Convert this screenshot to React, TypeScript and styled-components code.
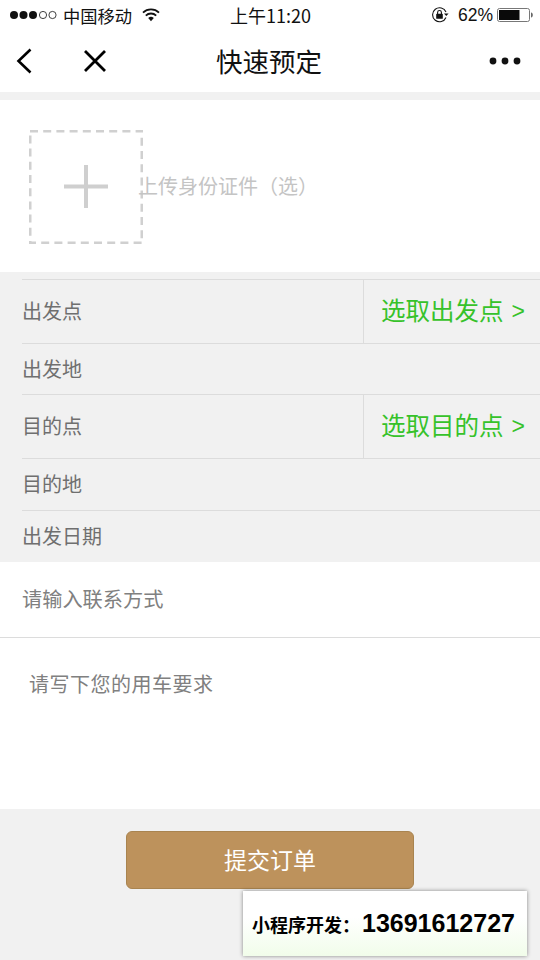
import React from 'react';
import styled, { createGlobalStyle } from 'styled-components';

const CJK = `"Noto Sans CJK SC", "Liberation Sans", sans-serif`;

const Global = createGlobalStyle`
  html, body { margin: 0; padding: 0; background: #f1f1f1; }
  * { box-sizing: border-box; }
  body { font-family: ${CJK}; }
`;

const Page = styled.div`
  position: relative;
  width: 540px;
  height: 960px;
  overflow: hidden;
  background: #f1f1f1;
`;

const StatusBar = styled.div`
  position: relative;
  height: 30px;
  background: #fff;
  display: flex;
  align-items: center;
  justify-content: space-between;
  padding: 0 6px 0 9px;
  color: #111;
`;

const StatusSide = styled.div`
  display: flex;
  align-items: center;
`;

const Carrier = styled.span`
  margin-left: 5px;
  margin-right: 10px;
  font-size: 17.3px;
`;

const Clock = styled.span`
  position: absolute;
  left: 1px;
  right: 0;
  text-align: center;
  font-size: 18px;
  pointer-events: none;
`;

const Percent = styled.span`
  margin: 0 4px 0 9px;
  font-family: "Liberation Sans", sans-serif;
  font-size: 17.5px;
`;

const NavBar = styled.div`
  position: relative;
  height: 62px;
  background: #fff;
  display: flex;
  align-items: center;
  justify-content: space-between;
  padding: 0 19px 0 15px;
`;

const NavLeft = styled.div`
  display: flex;
  align-items: center;
  gap: 50px;
`;

const Title = styled.div`
  position: absolute;
  left: 0;
  right: 0;
  padding: 0 2px 2px 0;
  text-align: center;
  font-size: 26.5px;
  color: #111;
`;

const UploadCard = styled.div`
  margin-top: 8px;
  height: 172px;
  background: #fff;
  display: flex;
  align-items: center;
  padding: 1px 0 0 29px;
`;

const UploadBox = styled.div`
  flex: none;
  width: 114px;
  height: 114px;
  display: flex;
  align-items: center;
  justify-content: center;
`;

const UploadText = styled.span`
  font-size: 20px;
  color: #c4c4c4;
  margin: 0 0 3px -5px;
`;

const Form = styled.div`
  height: 290px;
  padding: 7px 0 0 22px;
`;

const Row = styled.div<{ $h: number }>`
  height: ${p => p.$h}px;
  border-top: 1px solid #dcdcdc;
  display: flex;
  align-items: stretch;
  font-size: 20px;
  color: #6f6f6f;
`;

const RowLabel = styled.div`
  flex: 1;
  display: flex;
  align-items: center;
  padding-bottom: 2px;
`;

const PickCell = styled.div`
  width: 177px;
  border-left: 1px solid #dcdcdc;
  display: flex;
  align-items: center;
  padding: 0 0 4px 17px;
  font-size: 24.5px;
  color: #36c22a;
  white-space: nowrap;
`;

const Arrow = styled.span`
  margin: 3px 0 0 8px;
  font-family: "Liberation Sans", sans-serif;
  font-size: 23px;
`;

const Inputs = styled.div`
  background: #fff;
  height: 247px;
`;

const ContactRow = styled.div`
  height: 76px;
  border-bottom: 1px solid #dcdcdc;
  display: flex;
  align-items: center;
  padding: 0 0 3px 22px;
  font-size: 20.2px;
  color: #808080;
`;

const Remark = styled.div`
  padding: 32px 0 0 29px;
  font-size: 20px;
  letter-spacing: 0.5px;
  line-height: 28px;
  color: #808080;
`;

const Footer = styled.div`
  display: flex;
  justify-content: center;
  padding-top: 22px;
`;

const Submit = styled.button`
  width: 288px;
  height: 58px;
  padding: 0 0 3px;
  border: 1px solid #a98450;
  border-radius: 6px;
  background: #bd925c;
  color: #fff;
  font-family: ${CJK};
  font-size: 23px;
`;

const Promo = styled.div`
  position: absolute;
  left: 243px;
  top: 891px;
  width: 284px;
  height: 65px;
  display: flex;
  align-items: center;
  padding: 0 0 0 9px;
  white-space: nowrap;
  background: linear-gradient(#ffffff 40%, #f1fdea);
  box-shadow: 0 0 4px rgba(0, 0, 0, 0.45);
  color: #000;
`;

const PromoLabel = styled.span`
  font-size: 18px;
  font-weight: 700;
  margin-right: 2px;
`;

const PromoPhone = styled.span`
  font-family: "Liberation Sans", sans-serif;
  font-size: 25px;
  font-weight: 700;
`;

const SignalDots = () => (
  <svg width="49" height="10" viewBox="0 0 49 10">
    {[5, 14.5, 24].map(x => <circle key={x} cx={x} cy="5" r="4" fill="#111" />)}
    {[34, 43.5].map(x => <circle key={x} cx={x} cy="5" r="3.6" fill="none" stroke="#111" strokeWidth="0.8" />)}
  </svg>
);

const WifiIcon = () => (
  <svg width="18" height="14" viewBox="0 0 18 14">
    <path d="M1 4.6 A11.5 11.5 0 0 1 17 4.6" fill="none" stroke="#111" strokeWidth="1.8" />
    <path d="M3.8 7.6 A7.5 7.5 0 0 1 14.2 7.6" fill="none" stroke="#111" strokeWidth="1.8" />
    <path d="M6.2 10 A4 4 0 0 1 11.8 10 L9 13.2 Z" fill="#111" />
  </svg>
);

const LockRotation = () => (
  <svg width="18" height="18" viewBox="0 0 18 18">
    <path d="M15 11.5 A7 7 0 1 1 15 6" fill="none" stroke="#111" strokeWidth="1.1" />
    <path d="M13 7.5 L17.6 7.5 L15.3 10 Z" fill="#111" />
    <rect x="5.2" y="7.8" width="6.6" height="5" rx="0.6" fill="#111" />
    <path d="M6.6 8 V6.4 A1.9 1.9 0 0 1 10.4 6.4 V8" fill="none" stroke="#111" strokeWidth="1.1" />
  </svg>
);

const Battery = () => (
  <svg width="37" height="16" viewBox="0 0 37 16">
    <rect x="0.5" y="1.5" width="32" height="13" rx="2" fill="none" stroke="#777" />
    <rect x="2" y="3" width="20.5" height="10" fill="#0a0a0a" />
    <path d="M34.3 5.5 C36 5.8 36 10.2 34.3 10.5 Z" fill="#222" />
  </svg>
);

const BackIcon = () => (
  <svg width="18" height="28" viewBox="0 0 18 28">
    <path d="M15.5 2.5 L3.5 14 L15.5 25.5" fill="none" stroke="#000" strokeWidth="2.6" />
  </svg>
);

const CloseIcon = () => (
  <svg width="24" height="24" viewBox="0 0 24 24">
    <path d="M2 2 L22 22 M22 2 L2 22" fill="none" stroke="#000" strokeWidth="2.8" />
  </svg>
);

const MoreIcon = () => (
  <svg width="32" height="8" viewBox="0 0 32 8">
    {[4, 16, 28].map(x => <circle key={x} cx={x} cy="4" r="3.4" fill="#111" />)}
  </svg>
);

const UploadFrame = () => (
  <svg width="114" height="114" viewBox="0 0 114 114">
    <rect x="1" y="1" width="112" height="112" fill="none" stroke="#d0d0d0" strokeWidth="3" strokeDasharray="8 5.2" />
    <path d="M57 35 V78 M35 56.5 H79" fill="none" stroke="#cfcfcf" strokeWidth="4" />
  </svg>
);

export default function App() {
  return (
    <Page>
      <Global />
      <StatusBar>
        <StatusSide>
          <SignalDots />
          <Carrier>中国移动</Carrier>
          <WifiIcon />
        </StatusSide>
        <Clock>上午11:20</Clock>
        <StatusSide>
          <LockRotation />
          <Percent>62%</Percent>
          <Battery />
        </StatusSide>
      </StatusBar>
      <NavBar>
        <NavLeft>
          <BackIcon />
          <CloseIcon />
        </NavLeft>
        <Title>快速预定</Title>
        <MoreIcon />
      </NavBar>
      <UploadCard>
        <UploadBox><UploadFrame /></UploadBox>
        <UploadText>上传身份证件（选）</UploadText>
      </UploadCard>
      <Form>
        <Row $h={64}>
          <RowLabel>出发点</RowLabel>
          <PickCell>选取出发点<Arrow>&gt;</Arrow></PickCell>
        </Row>
        <Row $h={51}><RowLabel>出发地</RowLabel></Row>
        <Row $h={64}>
          <RowLabel>目的点</RowLabel>
          <PickCell>选取目的点<Arrow>&gt;</Arrow></PickCell>
        </Row>
        <Row $h={52}><RowLabel>目的地</RowLabel></Row>
        <Row $h={52}><RowLabel>出发日期</RowLabel></Row>
      </Form>
      <Inputs>
        <ContactRow>请输入联系方式</ContactRow>
        <Remark>请写下您的用车要求</Remark>
      </Inputs>
      <Footer>
        <Submit>提交订单</Submit>
      </Footer>
      <Promo>
        <PromoLabel>小程序开发：</PromoLabel>
        <PromoPhone>13691612727</PromoPhone>
      </Promo>
    </Page>
  );
}
